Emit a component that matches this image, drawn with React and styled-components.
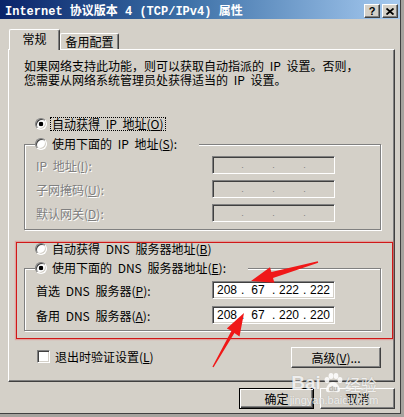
import React from "react";
import styled, { createGlobalStyle } from "styled-components";

const GlobalStyle = createGlobalStyle`
  body {
    margin: 0;
    background: #a6a39e;
    font-family: "Noto Sans CJK SC", "Noto Sans", sans-serif;
    font-size: 12px;
    word-spacing: 3px;
    color: #000;
  }
`;

// Window frame
const Window = styled.div`
  position: relative;
  width: 401px;
  height: 414px;
  box-sizing: border-box;
  background: #d4d0c8;
  border-right: 1px solid #404040;
  border-bottom: 1px solid #404040;
  display: flex;
  flex-direction: column;
  overflow: hidden;
`;

const TitleBar = styled.div`
  height: 19px;
  display: flex;
  align-items: center;
  padding: 0 2px 0 5px;
  background: linear-gradient(90deg, #0a246a 0%, #3a6ea5 45%, #a6caf0 100%);
  color: #fff;
  font-family: "Liberation Mono", "Noto Sans CJK SC", monospace;
  font-weight: bold;
  font-size: 12px;
  word-spacing: 0;
  white-space: pre;
`;

const TitleButtons = styled.div`
  margin-left: auto;
  display: flex;
  gap: 2px;
  padding-top: 3px;
`;

const CaptionButton = styled.div`
  width: 16px;
  height: 14px;
  box-sizing: border-box;
  display: flex;
  align-items: center;
  justify-content: center;
  background: #d4d0c8;
  border: 1px solid;
  border-color: #fff #404040 #404040 #fff;
  box-shadow: inset -1px -1px 0 #808080;
  color: #000;
  font-family: "Liberation Sans", Arial, sans-serif;
  font-weight: bold;
  font-size: 11px;
  line-height: 1;
`;

// Tabs
const TabRow = styled.div`
  display: flex;
  align-items: flex-end;
  margin: 10px 0 0 9px;
  height: 20px;
`;

const Tab = styled.div`
  position: relative;
  z-index: 1;
  box-sizing: border-box;
  width: ${(p) => p.$w}px;
  height: ${(p) => (p.$active ? 21 : 16)}px;
  margin-bottom: ${(p) => (p.$active ? -1 : 0)}px;
  display: flex;
  align-items: center;
  justify-content: center;
  background: #d4d0c8;
  border: 1px solid;
  border-bottom: none;
  border-color: #fff #404040 #404040 #fff;
  border-radius: 2px 2px 0 0;
  box-shadow: inset -1px 0 0 #808080;
  padding-bottom: ${(p) => (p.$active ? 2 : 0)}px;
  line-height: 12px;
`;

const Panel = styled.div`
  margin: 0 5px 0 8px;
  height: 333px;
  box-sizing: border-box;
  border: 1px solid;
  border-color: #fff #404040 #404040 #fff;
  box-shadow: inset -1px -1px 0 #808080;
  padding: 9px 0 0 15px;
  display: flex;
  flex-direction: column;
  align-items: flex-start;
`;

const Intro = styled.p`
  margin: 0;
  line-height: 14px;
  white-space: pre;
`;

// Radio buttons
const RadioRow = styled.div`
  display: flex;
  align-items: center;
  gap: 3px;
  height: 16px;
  margin-top: ${(p) => p.$mt || 0}px;
  margin-left: ${(p) => p.$ml || 0}px;
  white-space: pre;
`;

const Radio = styled.span`
  width: 12px;
  height: 12px;
  box-sizing: border-box;
  border-radius: 50%;
  border: 1px solid;
  border-color: #808080 #fff #fff #808080;
  box-shadow: inset 1px 1px 0 #404040, inset -1px -1px 0 #d4d0c8;
  background: ${(p) =>
    p.$checked
      ? "radial-gradient(circle, #000 0 2px, #fff 2.6px)"
      : "#fff"};
`;

const RadioText = styled.span`
  border: 1px dotted ${(p) => (p.$focus ? "#000" : "transparent")};
  padding: 0 1px;
  line-height: 12px;
`;

// Group boxes
const Group = styled.fieldset`
  margin: ${(p) => p.$mt}px 0 0;
  width: 357px;
  min-width: 0;
  box-sizing: border-box;
  padding: ${(p) => p.$pt}px 0 ${(p) => p.$pb}px 10px;
  border: 1px solid #808080;
  box-shadow: 1px 1px 0 #fff, inset 1px 1px 0 #fff;
`;

const Legend = styled.legend`
  padding: 0 20px 0 0;
  background: #d4d0c8;
`;

const FieldGrid = styled.div`
  display: grid;
  grid-template-columns: 177px 123px;
  row-gap: ${(p) => p.$gap}px;
  align-items: center;
`;

const FieldLabel = styled.span`
  padding-left: 1px;
  white-space: pre;
  color: ${(p) => (p.$disabled ? "#808080" : "#000")};
  text-shadow: ${(p) => (p.$disabled ? "1px 1px 0 #fff" : "none")};
`;

const IpBox = styled.div`
  height: 18px;
  box-sizing: border-box;
  display: grid;
  grid-template-columns: 1fr 3px 1fr 3px 1fr 3px 1fr;
  align-items: center;
  background: ${(p) => (p.$disabled ? "#d4d0c8" : "#fff")};
  border: 1px solid;
  border-color: #808080 #fff #fff #808080;
  box-shadow: inset 1px 1px 0 #404040, inset -1px -1px 0 #d4d0c8;
  font-family: "Liberation Sans", Arial, sans-serif;
  font-size: 12px;
  line-height: 14px;
  word-spacing: 0;
  color: ${(p) => (p.$disabled ? "#808080" : "#000")};
`;

const Octet = styled.span`
  text-align: center;
`;

const Dot = styled.span`
  text-align: center;
  font-size: ${(p) => (p.$small ? 9 : 12)}px;
`;

// Bottom parts
const OptionRow = styled.div`
  width: 357px;
  margin-top: 16px;
  display: flex;
  justify-content: space-between;
  align-items: flex-start;
`;

const CheckLabel = styled.label`
  display: flex;
  align-items: center;
  gap: 5px;
  margin: 1px 0 0 13px;
  white-space: pre;
`;

const Checkbox = styled.span`
  width: 13px;
  height: 13px;
  box-sizing: border-box;
  background: #fff;
  border: 1px solid;
  border-color: #808080 #fff #fff #808080;
  box-shadow: inset 1px 1px 0 #404040, inset -1px -1px 0 #d4d0c8;
`;

const Button = styled.button`
  width: ${(p) => p.$w}px;
  height: 21px;
  padding: 0;
  box-sizing: border-box;
  background: #d4d0c8;
  color: #000;
  font-family: "Noto Sans CJK SC", sans-serif;
  font-size: 12px;
  line-height: 12px;
  white-space: pre;
  border: 1px solid;
  border-color: ${(p) => (p.$default ? "#000" : "#fff #404040 #404040 #fff")};
  box-shadow: ${(p) =>
    p.$default
      ? "inset 1px 1px 0 #fff, inset -1px -1px 0 #404040, inset -2px -2px 0 #808080"
      : "inset -1px -1px 0 #808080"};
`;

const Footer = styled.div`
  display: flex;
  justify-content: flex-end;
  gap: 6px;
  margin: 6px 5px 0 0;
`;

// Annotations drawn over the dialog
const RedBox = styled.div`
  position: absolute;
  left: 16px;
  top: 242px;
  width: 377px;
  height: 97px;
  box-sizing: border-box;
  border: 1px solid #d01818;
  box-shadow: 0 0 1px 1px rgba(240, 80, 80, 0.35);
  pointer-events: none;
`;

const Overlay = styled.svg`
  position: absolute;
  left: 0;
  top: 0;
  pointer-events: none;
`;

const Watermark = styled.div`
  position: absolute;
  left: 289px;
  top: 373px;
  width: 90px;
  color: rgba(255, 255, 255, 0.82);
  text-shadow: 0 0 1px rgba(120, 120, 120, 0.5);
  display: flex;
  flex-direction: column;
  align-items: center;
  word-spacing: 0;
  pointer-events: none;
`;

const WmTop = styled.div`
  display: flex;
  align-items: flex-end;
  gap: 1px;
  font-family: "Liberation Sans", Arial, sans-serif;
  font-weight: bold;
  font-size: 19px;
  line-height: 20px;
`;

const WmCjk = styled.span`
  font-family: "Noto Sans CJK SC", sans-serif;
  font-weight: normal;
  font-size: 16px;
  line-height: 18px;
`;

const WmUrl = styled.div`
  font-family: "Liberation Sans", Arial, sans-serif;
  font-size: 11px;
  line-height: 12px;
  margin-top: 1px;
`;

const U = styled.span`
  text-decoration: underline;
`;

const IpField = ({ values, disabled }) => (
  <IpBox $disabled={disabled}>
    <Octet>{values ? values[0] : ""}</Octet>
    <Dot $small={disabled}>.</Dot>
    <Octet>{values ? values[1] : ""}</Octet>
    <Dot $small={disabled}>.</Dot>
    <Octet>{values ? values[2] : ""}</Octet>
    <Dot $small={disabled}>.</Dot>
    <Octet>{values ? values[3] : ""}</Octet>
  </IpBox>
);

const App = () => {
  return (
    <>
      <GlobalStyle />
      <Window>
        <TitleBar>
          <span>Internet 协议版本 4 (TCP/IPv4) 属性</span>
          <TitleButtons>
            <CaptionButton>?</CaptionButton>
            <CaptionButton>
              <svg width="8" height="7" viewBox="0 0 8 7">
                <path d="M0.5 0.5 L7.5 6.5 M7.5 0.5 L0.5 6.5" stroke="#000" strokeWidth="1.8" />
              </svg>
            </CaptionButton>
          </TitleButtons>
        </TitleBar>

        <TabRow>
          <Tab $active $w={51}>常规</Tab>
          <Tab $w={59}>备用配置</Tab>
        </TabRow>

        <Panel>
          <Intro>
            {"如果网络支持此功能，则可以获取自动指派的 IP 设置。否则，\n您需要从网络系统管理员处获得适当的 IP 设置。"}
          </Intro>

          <RadioRow $mt={29} $ml={11}>
            <Radio $checked />
            <RadioText $focus>
              自动获得 IP 地址(<U>O</U>)
            </RadioText>
          </RadioRow>

          <Group $mt={4} $pt={4} $pb={7}>
            <Legend>
              <RadioRow>
                <Radio />
                <RadioText>
                  使用下面的 IP 地址(<U>S</U>):
                </RadioText>
              </RadioRow>
            </Legend>
            <FieldGrid $gap={6}>
              <FieldLabel $disabled>
                IP 地址(<U>I</U>):
              </FieldLabel>
              <IpField disabled />
              <FieldLabel $disabled>
                子网掩码(<U>U</U>):
              </FieldLabel>
              <IpField disabled />
              <FieldLabel $disabled>
                默认网关(<U>D</U>):
              </FieldLabel>
              <IpField disabled />
            </FieldGrid>
          </Group>

          <RadioRow $mt={11} $ml={11}>
            <Radio />
            <RadioText>
              自动获得 DNS 服务器地址(<U>B</U>)
            </RadioText>
          </RadioRow>

          <Group $mt={3} $pt={5} $pb={6}>
            <Legend>
              <RadioRow>
                <Radio $checked />
                <RadioText>
                  使用下面的 DNS 服务器地址(<U>E</U>):
                </RadioText>
              </RadioRow>
            </Legend>
            <FieldGrid $gap={7}>
              <FieldLabel>
                首选 DNS 服务器(<U>P</U>):
              </FieldLabel>
              <IpField values={["208", "67", "222", "222"]} />
              <FieldLabel>
                备用 DNS 服务器(<U>A</U>):
              </FieldLabel>
              <IpField values={["208", "67", "220", "220"]} />
            </FieldGrid>
          </Group>

          <OptionRow>
            <CheckLabel>
              <Checkbox />
              <span>
                退出时验证设置(<U>L</U>)
              </span>
            </CheckLabel>
            <Button $w={90}>
              高级(<U>V</U>)...
            </Button>
          </OptionRow>
        </Panel>

        <Footer>
          <Button $default $w={75}>确定</Button>
          <Button $w={75}>取消</Button>
        </Footer>

        <RedBox />

        <Watermark>
          <WmTop>
            <span>Bai</span>
            <svg width="22" height="20" viewBox="0 0 22 20">
              <g fill="rgba(255,255,255,0.85)">
                <ellipse cx="5" cy="7" rx="2.4" ry="3" />
                <ellipse cx="9" cy="3" rx="2.4" ry="3" />
                <ellipse cx="14" cy="3" rx="2.4" ry="3" />
                <ellipse cx="18" cy="7" rx="2.4" ry="3" />
                <path d="M11 9 C7 9 4 14 4 17 C4 19 6 19.5 8 19 C10 18.5 12 18.5 14 19 C16 19.5 18 19 18 17 C18 14 15 9 11 9 Z" />
              </g>
              <text x="7" y="18" fontSize="7" fontWeight="bold" fill="#b8b4ae" fontFamily="Liberation Sans, Arial, sans-serif">du</text>
            </svg>
            <WmCjk>经验</WmCjk>
          </WmTop>
          <WmUrl>jingyan.baidu.com</WmUrl>
        </Watermark>

        <Overlay width="401" height="414" viewBox="0 0 401 414">
          <polygon
            fill="#f01818"
            points="318.2,262.8 273,277.9 274.4,282.7 251,281 270,267.3 271.4,272.1 317.8,261.2"
          />
          <polygon
            fill="#f01818"
            points="213.6,367.3 234.4,333 239.5,336.5 244,313 226.8,328.6 231.5,330.8 212.4,366.7"
          />
        </Overlay>
      </Window>
    </>
  );
};

export default App;
